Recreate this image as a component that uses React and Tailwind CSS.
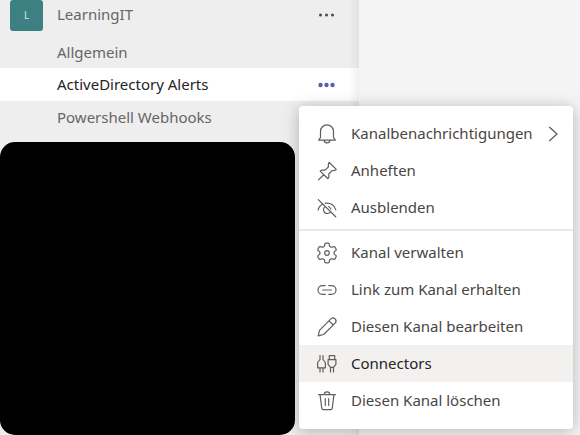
import React from "react";

const stroke = {
  fill: "none",
  stroke: "currentColor",
  strokeWidth: 1.2,
  strokeLinecap: "round",
  strokeLinejoin: "round",
};

function Icon({ children }) {
  return (
    <svg className="size-6 shrink-0 text-[#5f5e5c]" viewBox="0 0 24 24" aria-hidden="true" {...stroke}>
      {children}
    </svg>
  );
}

const BellIcon = () => (
  <Icon>
    <path d="M5.500 15.500V9.300a6.500 6.500 0 0 1 13 0v6.200l1.800 2.700H3.700zM9.200 18.400a2.800 2.400 0 0 0 5.600 0" />
  </Icon>
);

const PinIcon = () => (
  <Icon>
    <path d="M14 3.300l7.300 7.100-1.900 1.100-2.400.2-3.200 3.300.1 3.100-1 1.600-7.700-7.600 1.800-1.100 3.100.2 3.200-3.200.1-2.700zM8.700 15.800l-5.200 5.100" />
  </Icon>
);

const HiddenIcon = () => (
  <Icon>
    <path d="M3.300 3.600l17.400 17.200M3.100 14c.6-2.700 2.300-4.800 4.800-6M10.300 7.200c5.200-.9 9.300 2.200 10.500 6.600M9.600 11.200a3.700 3.700 0 1 0 5.300 5.200M13.400 10.500a3.700 3.700 0 0 1 2.500 2.700" />
  </Icon>
);

// Six teeth: outer edge, then the valley up to the next tooth.
const gearPoints = [0, 60, 120, 180, 240, 300]
  .flatMap((turn) => [
    [turn - 14, 9.4],
    [turn - 8, 9.9],
    [turn + 8, 9.9],
    [turn + 14, 9.4],
    [turn + 18, 7.8],
    [turn + 25, 7.1],
    [turn + 35, 7.1],
    [turn + 42, 7.8],
  ])
  .map(([deg, r]) => {
    const a = (deg * Math.PI) / 180;
    return `${(12 + r * Math.sin(a)).toFixed(2)},${(12 - r * Math.cos(a)).toFixed(2)}`;
  })
  .join(" ");

const GearIcon = () => (
  <Icon>
    <polygon points={gearPoints} />
    <circle cx="12" cy="12" r="2.300" />
  </Icon>
);

const LinkIcon = () => (
  <Icon>
    <path d="M10.200 7.600H7.400a4.400 4.400 0 0 0 0 8.800h2.800M13.800 7.600h2.800a4.400 4.400 0 0 1 0 8.800h-2.800M7.600 12h8.800" />
  </Icon>
);

const PencilIcon = () => (
  <Icon>
    <path d="M3.200 20.800l1.300-5.500L15.900 3.900a2.900 2.900 0 0 1 4.200 4.200L8.700 19.500zM14 5.800l4.200 4.200" />
  </Icon>
);

const PlugsIcon = () => (
  <Icon>
    <path d="M5 3.500v4L2.600 10.500v5.300H5V20M8 3.500v4l2.400 3v5.300H8V20M5 15.800h3M14.300 3.600h5.400v4h-5.400zM14.300 7.600h-1.200v4.800l2.400 3V20M19.700 7.600h1.200v4.800l-2.400 3V20M15.500 15.400h3" />
  </Icon>
);

const TrashIcon = () => (
  <Icon>
    <path d="M3.600 5.700h16.800M5 5.700l1.800 13.700a1.500 1.500 0 0 0 1.500 1.300h7.400a1.500 1.500 0 0 0 1.500-1.300L19 5.700M9.300 5.600a2.700 2.700 0 0 1 5.400 0M10.300 9.500v7M13.700 9.500v7" />
  </Icon>
);

function Dots({ active }) {
  return (
    <svg
      className={active ? "h-4 w-[17px] text-[#5b5da8]" : "h-4 w-[17px] text-[#4a4a4a]"}
      viewBox="0 0 17 16"
      fill="currentColor"
      aria-hidden="true"
    >
      {[2.5, 8.5, 14.5].map((x) => (
        <circle key={x} cx={x} cy="8" r={active ? 2.2 : 1.5} />
      ))}
    </svg>
  );
}

function MenuItem({ icon: IconShape, label, active, submenu }) {
  return (
    <button
      type="button"
      role="menuitem"
      className={
        "flex h-[37px] w-full items-center gap-3 pl-4 pr-3 text-left " +
        (active ? "bg-[#f2f1f0] text-[#252423]" : "text-[#484644]")
      }
    >
      <IconShape />
      <span className="flex-1 whitespace-nowrap">{label}</span>
      {submenu && (
        <svg className="h-4 w-4 shrink-0 text-[#5a5957]" viewBox="0 0 16 16" aria-hidden="true" {...stroke}>
          <path d="M4.500 1.300L12 8l-7.500 6.700" />
        </svg>
      )}
    </button>
  );
}

export default function App() {
  return (
    <div className="relative flex min-h-screen overflow-hidden bg-[#f4f4f4] font-['Noto_Sans','Open_Sans',sans-serif] text-[15px]">
      <aside className="flex w-[359px] shrink-0 flex-col bg-[#eeeeee] bg-linear-to-l from-[#e2e2e2] to-[#eeeeee] to-[10px]">
        <div className="flex h-9 items-start pl-[10px] pr-6">
          <div className="flex h-[31px] w-[33px] items-center justify-center rounded-[3px] bg-[#3d8082] text-[10px] text-[#d5e6e6]">
            L
          </div>
          <span className="ml-[14px] flex-1 leading-7 text-[#666666]">LearningIT</span>
          <button type="button" aria-label="Weitere Optionen" className="flex h-[30px] items-center">
            <Dots />
          </button>
        </div>
        <nav className="flex flex-col text-[#666666]">
          <a href="#allgemein" className="flex h-8 items-center pl-[57px]">
            Allgemein
          </a>
          <div className="flex h-[33px] items-center bg-white bg-linear-to-l from-[#f0f0f0] to-white to-[10px] pl-[57px] pr-6">
            <a href="#alerts" aria-current="page" className="flex-1 text-[#252423]">
              ActiveDirectory Alerts
            </a>
            <button type="button" aria-label="Weitere Kanaloptionen" className="flex items-center">
              <Dots active />
            </button>
          </div>
          <a href="#webhooks" className="flex h-[33px] items-center pl-[57px]">
            Powershell Webhooks
          </a>
        </nav>
        <div className="mr-16 mt-2 flex-1 rounded-[15px] bg-black" />
      </aside>
      <main className="flex-1" />
      <div
        role="menu"
        className="absolute left-[299px] top-[106px] w-[274px] rounded-[4px] bg-white pb-[10px] pt-[9px] shadow-[0_2px_16px_rgba(0,0,0,0.26)]"
      >
        <MenuItem icon={BellIcon} label="Kanalbenachrichtigungen" submenu />
        <MenuItem icon={PinIcon} label="Anheften" />
        <MenuItem icon={HiddenIcon} label="Ausblenden" />
        <div role="separator" className="my-[3px] h-[2px] bg-[#e8e8e8]" />
        <MenuItem icon={GearIcon} label="Kanal verwalten" />
        <MenuItem icon={LinkIcon} label="Link zum Kanal erhalten" />
        <MenuItem icon={PencilIcon} label="Diesen Kanal bearbeiten" />
        <MenuItem icon={PlugsIcon} label="Connectors" active />
        <MenuItem icon={TrashIcon} label="Diesen Kanal löschen" />
      </div>
    </div>
  );
}
